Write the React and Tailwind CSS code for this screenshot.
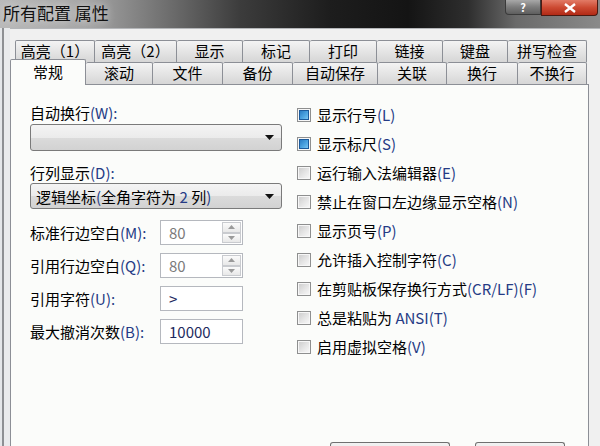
import React from 'react'

const font = { fontFamily: '"Noto Sans CJK SC", "Noto Sans", sans-serif' }

// ascii runs get the blue ClearType look seen in the screenshot
function Mix({ s }) {
  return s.split(/([\x21-\x7e]+)/).map((part, i) =>
    /[\x21-\x7e]/.test(part)
      ? <span key={i} className="text-[#253b85]">{part}</span>
      : <span key={i}>{part}</span>
  )
}

const row1 = [
  ['高亮（1）', 'w-[80px] border-l'], ['高亮（2）', 'w-[82px]'], ['显示', 'w-[66px]'], ['标记', 'w-[67px]'],
  ['打印', 'w-[67px]'], ['链接', 'w-[66px]'], ['键盘', 'w-[65px]'], ['拼写检查', 'w-[79px]'],
]
const row2 = [
  ['滚动', 'w-[67px]'], ['文件', 'w-[70px]'], ['备份', 'w-[70px]'], ['自动保存', 'w-[85px]'],
  ['关联', 'w-[69px]'], ['换行', 'w-[71px]'], ['不换行', 'w-[69px]'],
]

const checks = [
  ['显示行号(L)', true], ['显示标尺(S)', true], ['运行输入法编辑器(E)', false],
  ['禁止在窗口左边缘显示空格(N)', false], ['显示页号(P)', false], ['允许插入控制字符(C)', false],
  ['在剪贴板保存换行方式(CR/LF)(F)', false], ['总是粘贴为 ANSI(T)', false], ['启用虚拟空格(V)', false],
]

function Tab({ label, cls }) {
  return (
    <div className={'h-full flex items-center justify-center pb-[2px] border-t border-r border-[#8c8f96] rounded-t-[2px] bg-[linear-gradient(#f4f4f4,#e6e6e6_45%,#d6d6d6)] text-[15px] leading-none text-black ' + cls}>
      {label}
    </div>
  )
}

function Arrow() {
  return (
    <svg width="9" height="5" viewBox="0 0 9 5"><path d="M0 0h9L4.5 5z" fill="#111" /></svg>
  )
}

function Select({ value, h }) {
  return (
    <div className={'w-[252px] ' + h + ' flex items-center justify-between pl-[5px] pr-[7px] rounded-[3px] border border-[#7a7a7a] bg-[linear-gradient(#f4f4f4,#ebebeb_50%,#dbdbdb_51%,#d2d2d2)] text-[15px] leading-none text-black'}>
      <span><Mix s={value} /></span>
      <Arrow />
    </div>
  )
}

function Spin({ value }) {
  return (
    <div className="w-[83px] h-[25px] flex items-center justify-between border border-[#b5b8be] bg-white pl-[8px] pr-px text-[15px] leading-none text-[#7a7a7a]">
      <span>{value}</span>
      <div className="flex flex-col w-[19px] h-[21px]">
        {[0, 1].map(i => (
          <div key={i} className="flex-1 flex items-center justify-center border border-[#c9cbcf] bg-[linear-gradient(#fbfbfb,#e8e8e8)]">
            <svg width="7" height="4" viewBox="0 0 7 4">
              <path d={i === 0 ? 'M0 4h7L3.5 0z' : 'M0 0h7L3.5 4z'} fill="#9a9a9a" />
            </svg>
          </div>
        ))}
      </div>
    </div>
  )
}

function Field({ label, children }) {
  return (
    <div className="flex items-center h-[25px] mt-[8px]">
      <div className="w-[130px] text-[15px] leading-none text-black"><Mix s={label} /></div>
      {children}
    </div>
  )
}

function TextBox({ value }) {
  return (
    <div className="w-[83px] h-[25px] flex items-center border border-[#b5b8be] bg-white px-[8px] text-[15px] leading-none text-[#1d2a5e]">
      {value}
    </div>
  )
}

function Check({ label, on }) {
  return (
    <div className="h-[29px] flex items-center gap-[6px]">
      <div className="w-[14px] h-[14px] border border-[#8e8f8f] bg-[#f7f7f7] flex items-center justify-center">
        {on
          ? <div className="w-[10px] h-[10px] border border-[#1b5a9c] bg-[linear-gradient(135deg,#2a7cc4,#4fa7e3_60%,#7cc4f0)]" />
          : <div className="w-[10px] h-[10px] bg-[linear-gradient(135deg,#cfcfcf,#e6e6e6_55%,#f6f6f6)]" />}
      </div>
      <span className="text-[15px] leading-none text-black"><Mix s={label} /></span>
    </div>
  )
}

export default function App() {
  return (
    <div style={font} className="w-[600px] h-[446px] overflow-hidden bg-[#e4e7ea] flex flex-col">
      {/* aero title bar */}
      <div className="h-[28px] shrink-0 flex items-start justify-between bg-[linear-gradient(90deg,#b9b9b9_0%,#a3a3a3_15%,#6e6e6e_28%,#3c3c3c_40%,#1d1d1d_55%,#141414_68%,#2e2e2e_78%,#6a6a6a_86%,#8a8a8a_100%)]">
        <div className="pl-[3px] pt-[4px] text-[17px] leading-none text-[#111] [text-shadow:0_0_8px_#e8e8e8]">所有配置 属性</div>
        <div className="flex mr-[2px]">
          <div className="w-[36px] h-[15px] flex items-center justify-center rounded-bl-[4px] border border-t-0 border-[#3a3a3a] bg-[linear-gradient(#a8a8a8,#7c7c7c_50%,#5e5e5e)] text-white text-[11px] font-bold leading-[13px]">?</div>
          <div className="w-[57px] h-[16px] flex items-center justify-center rounded-br-[4px] border border-t-0 border-[#4a1a12] bg-[linear-gradient(#e27b66,#cc4a32_50%,#b22a16)]">
            <svg width="12" height="10" viewBox="0 0 12 10"><path d="M1 1l10 8M11 1L1 9" stroke="#fff" strokeWidth="2.4" /></svg>
          </div>
        </div>
      </div>

      <div className="flex-1 flex min-h-0">
        {/* window frame, left */}
        <div className="w-[10px] shrink-0 pl-[2px]">
          <div className="h-full border-l-[2px] border-[#8d9094] bg-[#e9ebed]" />
        </div>

        {/* dialog client area */}
        <div className="flex-1 bg-[#f0f0f0] border-t border-[#b4b6b9] pt-[11px] flex flex-col">
          <div className="h-[22px] shrink-0 flex pl-[5px]">
            {row1.map(([l, c]) => <Tab key={l} label={l} cls={c} />)}
          </div>
          <div className="h-[22px] shrink-0 flex items-end pl-[76px] relative z-10">
            <div className="absolute left-0 -bottom-px w-[76px] h-[26px] flex items-center justify-center border border-b-0 border-[#8c8f96] rounded-t-[2px] bg-[#fbfcfa] text-[15px] leading-none text-black pb-[2px]">
              常规
            </div>
            {row2.map(([l, c]) => <Tab key={l} label={l} cls={c} />)}
          </div>

          <div className="w-[579px] h-[372px] shrink-0 border border-[#8c8f96] bg-[#fbfcfa] flex flex-col">
            <div className="flex">
              <div className="w-[286px] pl-[19px] pt-[20px] flex flex-col">
                <div className="h-[19px] text-[15px] leading-none text-black"><Mix s="自动换行(W):" /></div>
                <Select value="" h="h-[27px]" />
                <div className="h-[20px] mt-[11px] text-[15px] leading-none text-black flex items-center"><Mix s="行列显示(D):" /></div>
                <div className="mt-px"><Select value="逻辑坐标(全角字符为 2 列)" h="h-[26px]" /></div>
                <div className="mt-[3px]">
                  <Field label="标准行边空白(M):"><Spin value="80" /></Field>
                  <Field label="引用行边空白(Q):"><Spin value="80" /></Field>
                  <Field label="引用字符(U):"><TextBox value=">" /></Field>
                  <Field label="最大撤消次数(B):"><TextBox value="10000" /></Field>
                </div>
              </div>
              <div className="pt-[15px] flex flex-col">
                {checks.map(([l, on]) => <Check key={l} label={l} on={on} />)}
              </div>
            </div>

            <div className="mt-auto flex justify-end gap-[25px] pr-[23px]">
              <div className="w-[120px] h-[13px] border border-b-0 border-[#707070] rounded-t-[3px] bg-[linear-gradient(#f2f2f2,#e6e6e6)]" />
              <div className="w-[90px] h-[13px] border border-b-0 border-[#707070] rounded-t-[3px] bg-[linear-gradient(#f2f2f2,#e6e6e6)]" />
            </div>
          </div>
        </div>
      </div>
    </div>
  )
}
